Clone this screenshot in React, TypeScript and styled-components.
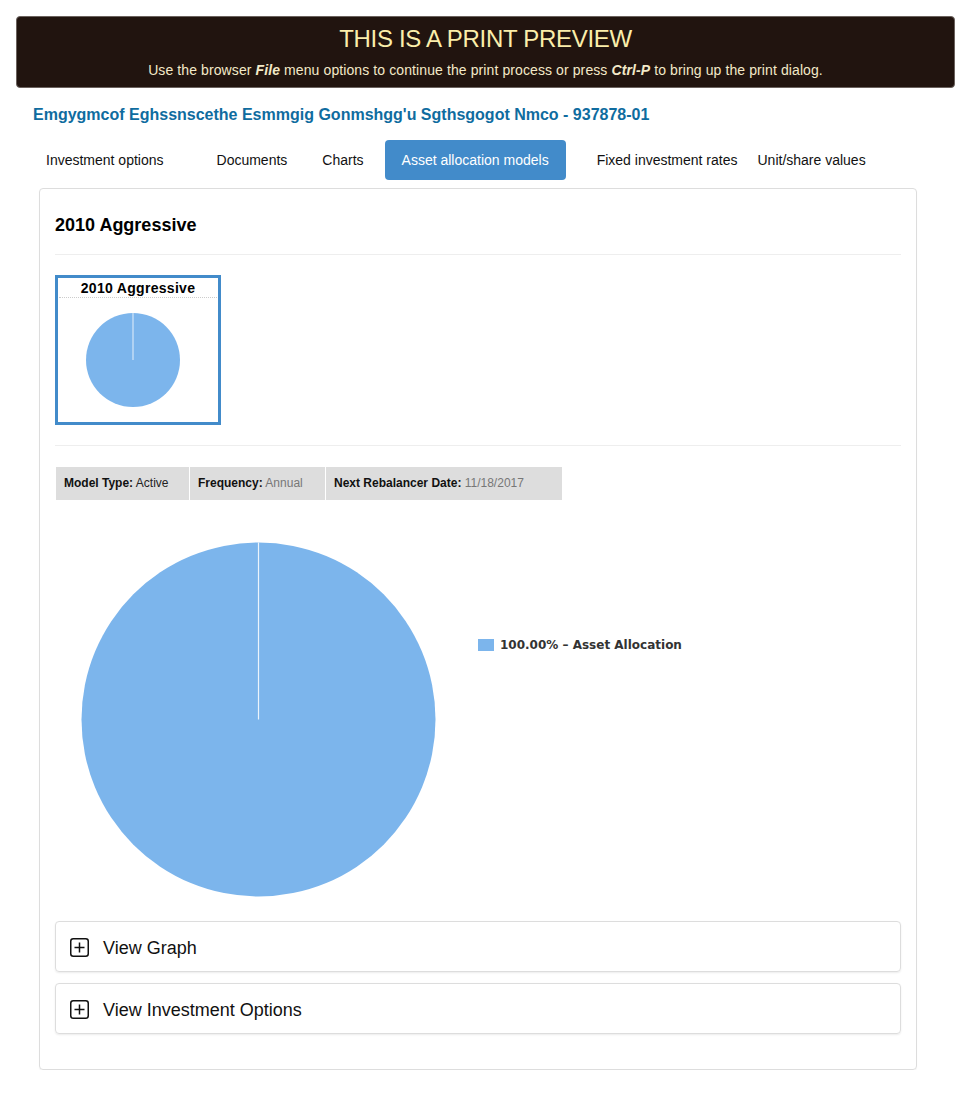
import React from "react";
import styled, { createGlobalStyle } from "styled-components";

const Global = createGlobalStyle`
  html, body { margin: 0; padding: 0; background: #fff; }
  body { font-family: "Liberation Sans", Arial, sans-serif; color: #333; }
  * { box-sizing: border-box; }
`;

const Page = styled.div`
  padding-top: 16px;
  width: 956px;
`;

const Banner = styled.div`
  margin: 0 1px 0 16px;
  height: 72px;
  background: #21140f;
  border-radius: 4px;
  border: 1px solid #6b625e;
  padding-top: 9px;
  text-align: center;
`;

const BannerTitle = styled.div`
  font-size: 24px;
  line-height: 26px;
  color: #fbeeaa;
  letter-spacing: -0.3px;
`;

const BannerText = styled.div`
  margin-top: 8px;
  font-size: 14px;
  line-height: 20px;
  color: #f3e9c8;
  letter-spacing: 0.1px;
  b { font-style: italic; font-weight: bold; }
`;

const PlanTitle = styled.h1`
  margin: 17px 0 0 33px;
  font-size: 16px;
  line-height: 20px;
  font-weight: bold;
  color: #0f6c9f;
`;

const Nav = styled.nav`
  display: flex;
  margin: 15px 0 0 33px;
  height: 40px;
`;

const Tab = styled.div<{ $ml: number; $active?: boolean }>`
  margin-left: ${(p) => p.$ml}px;
  height: 40px;
  line-height: 40px;
  font-size: 14px;
  white-space: nowrap;
  padding: 0 ${(p) => (p.$active ? 17 : 0)}px;
  border-radius: 4px;
  color: ${(p) => (p.$active ? "#fff" : "#111")};
  background: ${(p) => (p.$active ? "#428bca" : "transparent")};
`;

const Panel = styled.div`
  margin: 8px 0 0 39px;
  width: 878px;
  border: 1px solid #ddd;
  border-radius: 4px;
  padding: 0 15px 35px;
  box-shadow: 0 1px 1px rgba(0, 0, 0, 0.05);
`;

const PanelHeading = styled.h2`
  margin: 0;
  padding: 25px 0 18px;
  font-size: 18px;
  line-height: 22px;
  font-weight: bold;
  color: #000;
  border-bottom: 1px solid #eee;
`;

const ThumbRow = styled.div`
  padding: 20px 0 20px;
  border-bottom: 1px solid #eee;
`;

const Thumb = styled.div`
  width: 166px;
  height: 150px;
  border: 3px solid #428bca;
  display: flex;
  flex-direction: column;
  align-items: center;
`;

const ThumbTitle = styled.div`
  align-self: stretch;
  margin: 0 1px;
  height: 20px;
  line-height: 20px;
  text-align: center;
  font-size: 14px;
  font-weight: bold;
  color: #000;
  border-bottom: 1px dotted #ccc;
  letter-spacing: 0.3px;
`;

const ThumbPie = styled.svg`
  margin: 14px 10px 0 0;
`;

const InfoTable = styled.div`
  margin: 21px 0 0 1px;
  display: grid;
  grid-template-columns: 133px 135px 236px;
  column-gap: 1px;
  width: 506px;
`;

const InfoCell = styled.div`
  background: #ddd;
  height: 33px;
  line-height: 33px;
  padding-left: 8px;
  font-size: 12px;
  color: #222;
  white-space: nowrap;
  b { color: #111; }
`;

const InfoValue = styled.span<{ $muted?: boolean }>`
  color: ${(p) => (p.$muted ? "#777" : "#222")};
`;

const Chart = styled.svg`
  display: block;
  margin-top: 1px;
`;

const Accordion = styled.div`
  margin-top: 10px;
  display: flex;
  flex-direction: column;
  gap: 11px;
`;

const AccItem = styled.div`
  height: 51px;
  border: 1px solid #ddd;
  border-radius: 4px;
  box-shadow: 0 1px 2px rgba(0, 0, 0, 0.08);
  display: flex;
  align-items: center;
  padding: 3px 0 0 14px;
  gap: 14px;
  font-size: 18px;
  color: #111;
`;

const PlusBox = styled.svg`
  flex: none;
  margin-top: -2px;
`;

const PIE = "#7cb5ec";

function Plus() {
  return (
    <PlusBox width="19" height="19" viewBox="0 0 19 19">
      <rect x="0.75" y="0.75" width="17.5" height="17.5" rx="2.5" fill="none" stroke="#111" strokeWidth="1.5" />
      <path d="M9.5 4.5v10M4.5 9.5h10" stroke="#111" strokeWidth="1.5" />
    </PlusBox>
  );
}

const tabs: { label: string; ml: number; active?: boolean }[] = [
  { label: "Investment options", ml: 13 },
  { label: "Documents", ml: 53 },
  { label: "Charts", ml: 35 },
  { label: "Asset allocation models", ml: 21, active: true },
  { label: "Fixed investment rates", ml: 31 },
  { label: "Unit/share values", ml: 20 },
];

export default function App() {
  return (
    <Page>
      <Global />
      <Banner>
        <BannerTitle>THIS IS A PRINT PREVIEW</BannerTitle>
        <BannerText>
          Use the browser <b>File</b> menu options to continue the print process or press <b>Ctrl-P</b> to bring up the print dialog.
        </BannerText>
      </Banner>
      <PlanTitle>Emgygmcof Eghssnscethe Esmmgig Gonmshgg'u Sgthsgogot Nmco - 937878-01</PlanTitle>
      <Nav>
        {tabs.map((t) => (
          <Tab key={t.label} $ml={t.ml} $active={t.active}>
            {t.label}
          </Tab>
        ))}
      </Nav>
      <Panel>
        <PanelHeading>2010 Aggressive</PanelHeading>
        <ThumbRow>
          <Thumb>
            <ThumbTitle>2010 Aggressive</ThumbTitle>
            <ThumbPie width="96" height="96" viewBox="0 0 96 96">
              <circle cx="48" cy="48" r="47" fill={PIE} />
              <line x1="48" y1="1" x2="48" y2="48" stroke="#fff" strokeOpacity="0.8" strokeWidth="1" />
            </ThumbPie>
          </Thumb>
        </ThumbRow>
        <InfoTable>
          <InfoCell>
            <b>Model Type:</b> <InfoValue>Active</InfoValue>
          </InfoCell>
          <InfoCell>
            <b>Frequency:</b> <InfoValue $muted>Annual</InfoValue>
          </InfoCell>
          <InfoCell>
            <b>Next Rebalancer Date:</b> <InfoValue $muted>11/18/2017</InfoValue>
          </InfoCell>
        </InfoTable>
        <Chart width="846" height="410" viewBox="0 0 846 410">
          <circle cx="203.5" cy="218.5" r="177" fill={PIE} />
          <line x1="203.5" y1="41.5" x2="203.5" y2="218.5" stroke="#fff" strokeOpacity="0.85" strokeWidth="1.2" />
          <rect x="423" y="138" width="16" height="12" fill={PIE} />
          <text
            x="445"
            y="148"
            fontFamily="'DejaVu Sans', Verdana, sans-serif"
            fontSize="12"
            fontWeight="bold"
            fill="#333"
          >
            100.00% – Asset Allocation
          </text>
        </Chart>
        <Accordion>
          <AccItem>
            <Plus />
            View Graph
          </AccItem>
          <AccItem>
            <Plus />
            View Investment Options
          </AccItem>
        </Accordion>
      </Panel>
    </Page>
  );
}
